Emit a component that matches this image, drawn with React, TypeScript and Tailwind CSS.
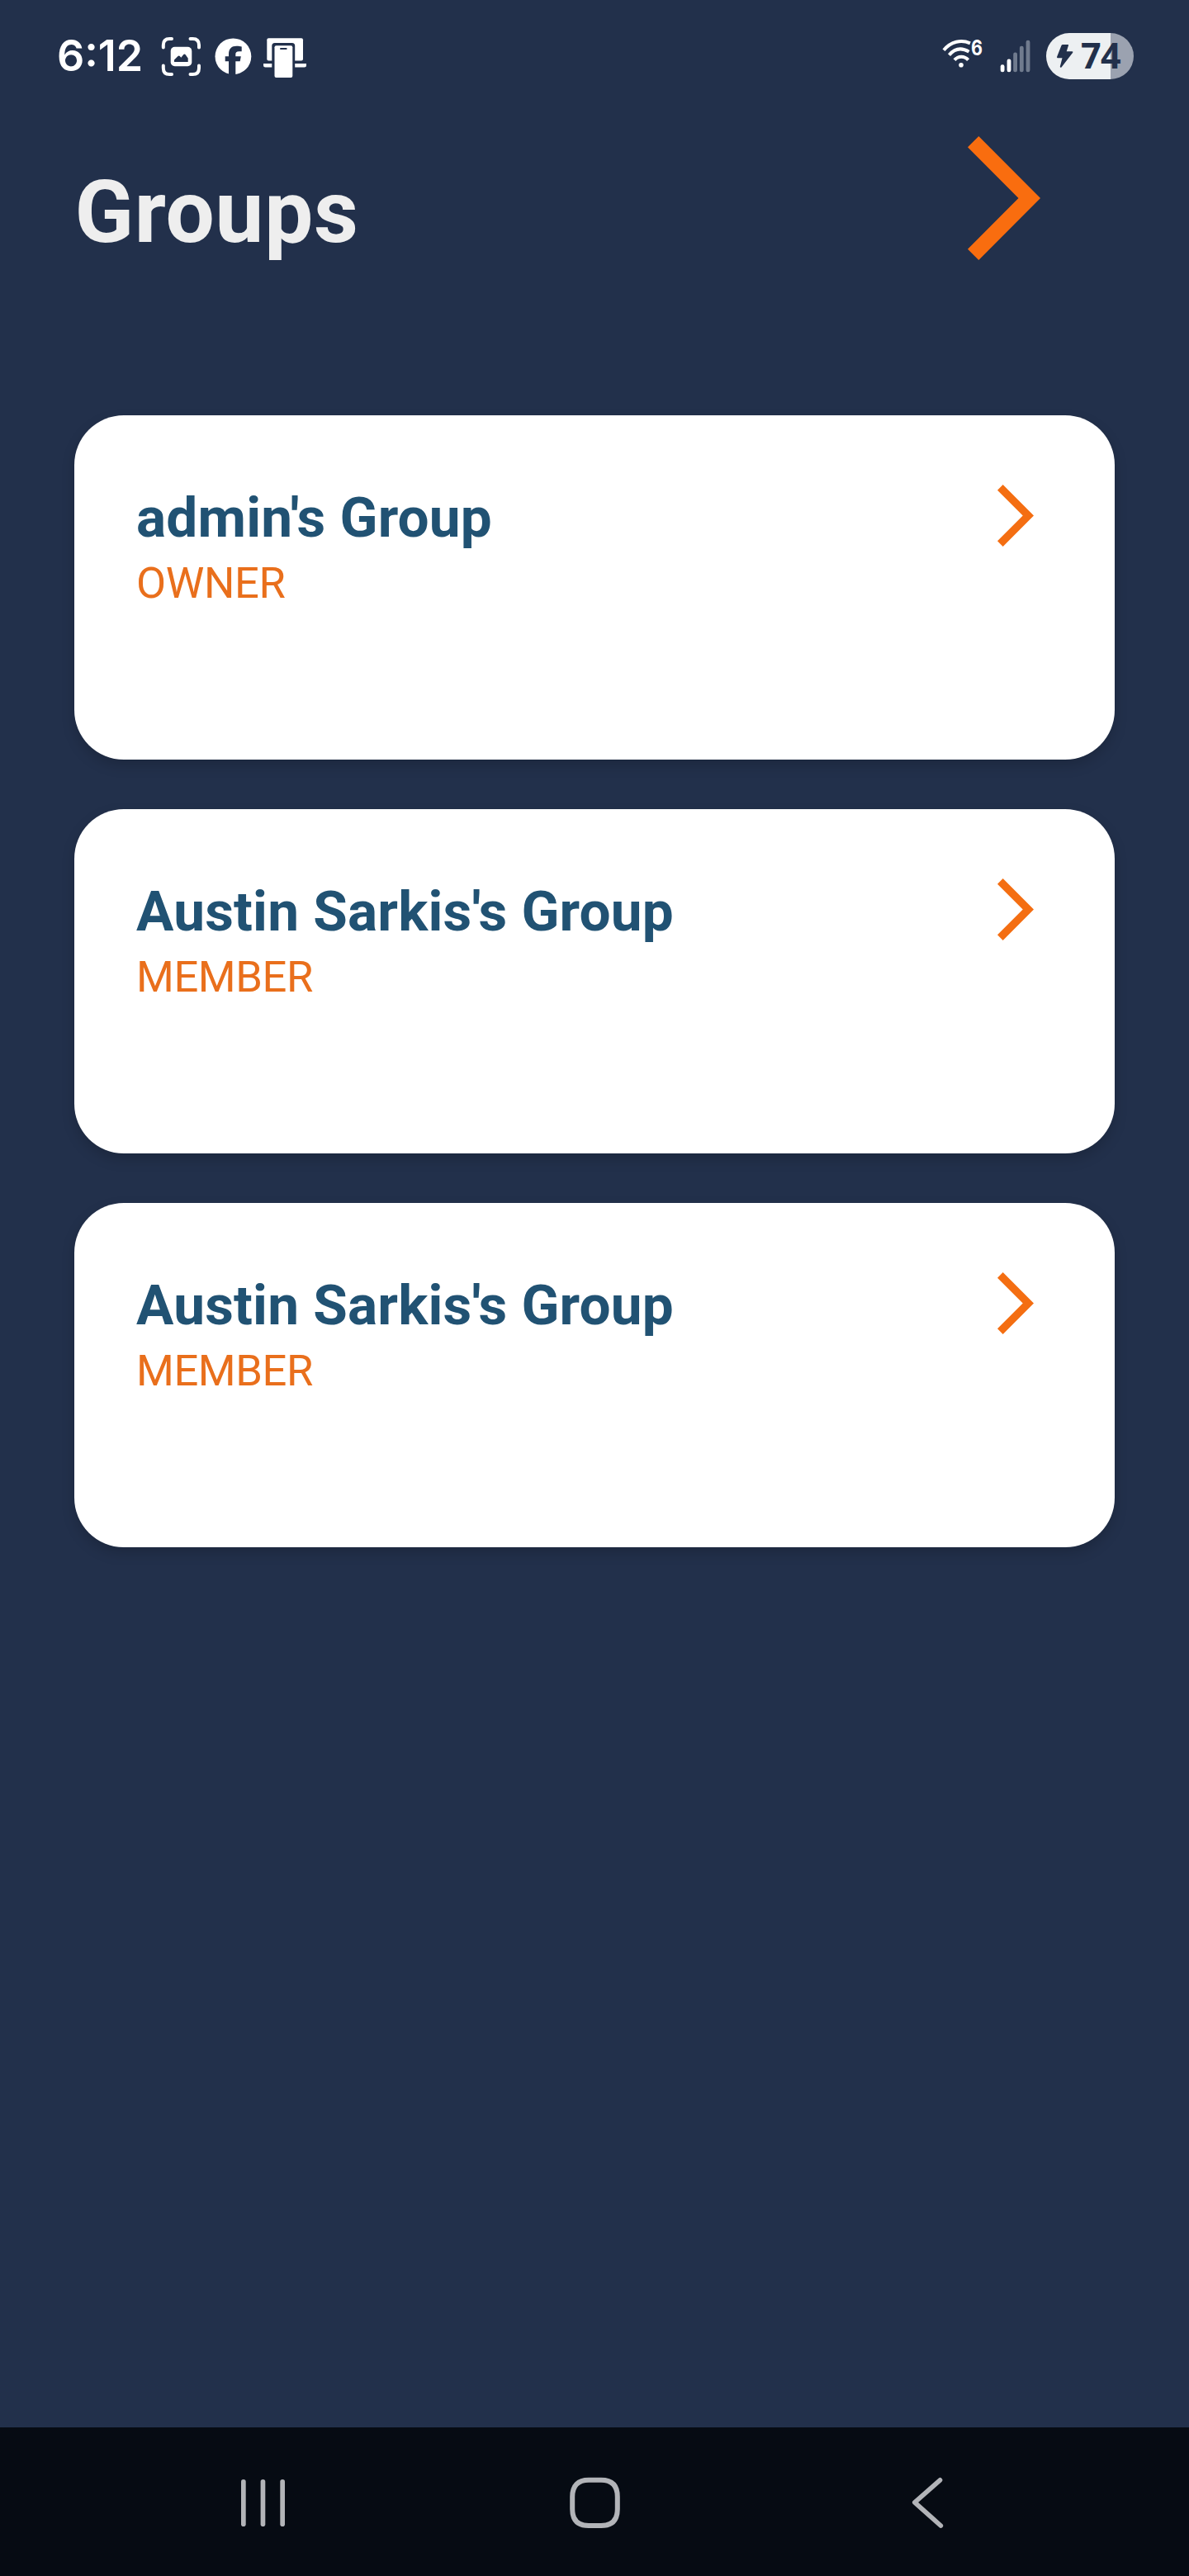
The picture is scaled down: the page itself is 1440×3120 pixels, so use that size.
import React from "react";

type Group = { name: string; role: string };

const groups: Group[] = [
  { name: "admin's Group", role: "OWNER" },
  { name: "Austin Sarkis's Group", role: "MEMBER" },
  { name: "Austin Sarkis's Group", role: "MEMBER" },
];

function CaptureIcon() {
  return (
    <svg className="ml-[24px] h-[56px] w-[50px]" viewBox="0 0 50 56" fill="none">
      <g stroke="#fff" strokeWidth="4" strokeLinecap="round">
        <path d="M2.8 17.5V14.5Q2.8 7 10.3 7H13" />
        <path d="M35.5 7H38.5Q46 7 46 14.5V17.5" />
        <path d="M2.8 39.5V42.5Q2.8 50 10.3 50H13" />
        <path d="M35.5 50H38.5Q46 50 46 42.5V39.5" />
      </g>
      <rect x="11.7" y="16.7" width="25.6" height="23.5" rx="5" fill="#fff" />
      <path
        d="M16 35V32.5L20.5 28Q21.7 27 22.8 28L24.3 29.7L27.3 26Q28.3 24.8 29.5 26L32.7 30.5V35Z"
        fill="#22304b"
      />
    </svg>
  );
}

function FacebookIcon() {
  return (
    <svg className="ml-[15px] h-[56px] w-[45px]" viewBox="0 0 45 56">
      <circle cx="22.4" cy="28.3" r="21.9" fill="#fff" />
      <path
        d="M17 52V34.3H12.7V28.3H17V25.5C17 19 20.5 15.8 26.5 15.8C29 15.8 31 16.1 32.7 16.5V22.2H29.5C26.3 22.2 25.3 23.5 25.3 25.8V28.3H31.8L30.7 34.3H25.3V52Z"
        fill="#22304b"
      />
    </svg>
  );
}

function LinkedPhoneIcon() {
  return (
    <svg className="ml-[13px] h-[56px] w-[54px]" viewBox="0 0 54 56">
      <rect x="5.3" y="6.3" width="43.7" height="27.2" rx="2" fill="#fff" />
      <path d="M1 37H53V39Q53 41.5 50.5 41.5H3.5Q1 41.5 1 39Z" fill="#fff" />
      <path d="M11.3 56V15.5Q11.3 12 14.8 12H35.7Q39.2 12 39.2 15.5V56Z" fill="#22304b" />
      <rect x="14.5" y="15.2" width="21.8" height="38.8" rx="2" fill="#fff" />
      <rect x="21" y="17.9" width="8.7" height="2.2" rx="1" fill="#22304b" />
    </svg>
  );
}

function WifiIcon() {
  return (
    <svg className="h-[56px] w-[52px]" viewBox="0 0 52 56" fill="none">
      <g stroke="#fff" strokeWidth="4">
        <path d="M3 20.8C12 10 24 7.8 35 12.3" />
        <path d="M9.500 26.6C16 19 24 17 33.5 22.6" />
        <path d="M16 32.6C20.5 27.3 28 27.3 32.6 32.6" />
      </g>
      <circle cx="24" cy="38.7" r="2.8" fill="#fff" />
      <text
        x="36"
        y="26.5"
        fill="#fff"
        fontFamily="Inter, sans-serif"
        fontSize="25"
        fontWeight="700"
        textLength="14"
        lengthAdjust="spacingAndGlyphs"
      >
        6
      </text>
    </svg>
  );
}

function SignalIcon() {
  return (
    <svg className="ml-[16px] h-[56px] w-[42px]" viewBox="0 0 42 56">
      <rect x="3.7" y="38.3" width="4.8" height="9" rx="2.2" fill="#fff" />
      <rect x="11.6" y="31.5" width="4.8" height="15.8" rx="2.2" fill="#fff" />
      <g fill="#707b8e">
        <rect x="19.2" y="23.5" width="4.8" height="23.8" rx="2.2" />
        <rect x="26.9" y="15.7" width="4.8" height="31.6" rx="2.2" />
        <rect x="34.6" y="8.7" width="4.8" height="38.6" rx="2.2" />
      </g>
    </svg>
  );
}

function Battery() {
  return (
    <div className="ml-[17px] flex h-[56px] w-[106px] items-center rounded-full bg-[linear-gradient(90deg,#edf0f2_78px,#9ba2b0_78px)]">
      <svg className="ml-[12px] h-[56px] w-[22px] shrink-0" viewBox="12 0 22 56">
        <path
          d="M20 14H26.5Q27.3 14 27 15L24.7 22.3H31.5Q33 22.5 32.2 23.7L18.5 41.5Q17 42.5 16.8 40.8L19.5 30.2H13.8Q12.7 30 13.1 28.8L18.5 15Q19 14 20 14Z"
          fill="#22304b"
        />
      </svg>
      <span className="mb-[3px] ml-[8px] font-[Open_Sans,sans-serif] text-[43px] leading-[56px] font-bold tracking-[-0.5px] text-[#22304b]">
        74
      </span>
    </div>
  );
}

function StatusBar() {
  return (
    <div className="flex h-[136px] items-center justify-between pr-[67px] pl-[69px] font-[Inter,sans-serif]">
      <div className="flex items-center">
        <span className="w-[102px] text-[52px] leading-[56px] font-semibold whitespace-nowrap text-white">6:12</span>
        <CaptureIcon />
        <FacebookIcon />
        <LinkedPhoneIcon />
      </div>
      <div className="flex items-center">
        <WifiIcon />
        <SignalIcon />
        <Battery />
      </div>
    </div>
  );
}

function Chevron({ className }: { className: string }) {
  return (
    <svg className={className} viewBox="0 0 88 150">
      <path d="M13.3 0L88 75L13.3 150L0 136.7L61.5 75L0 13.3Z" />
    </svg>
  );
}

function GroupCard({ name, role }: Group) {
  return (
    <button className="flex h-[417px] w-full items-start justify-between rounded-[60px] bg-white pt-[84px] pr-[98px] pl-[75px] text-left shadow-[0_7px_16px_rgba(0,0,0,0.17)]">
      <span className="flex flex-col">
        <span className="text-[67.5px] leading-[80px] font-bold tracking-[0.2px] whitespace-nowrap text-[#215273]">
          {name}
        </span>
        <span className="mt-[7px] text-[52.5px] leading-[64px] tracking-[-0.4px] text-[#e96f1c]">{role}</span>
      </span>
      <Chevron className="h-[75px] w-[44px] fill-[#f46e12]" />
    </button>
  );
}

function NavigationBar() {
  return (
    <nav className="flex h-[180px] items-center justify-between bg-[#060b13] pr-[275px] pl-[279px]">
      <svg className="size-[80px]" viewBox="0 0 80 80" fill="#b2b4b8">
        <rect x="13" y="13" width="5.7" height="57" rx="2.8" />
        <rect x="36.6" y="13" width="5.7" height="57" rx="2.8" />
        <rect x="60.3" y="13" width="5.7" height="57" rx="2.8" />
      </svg>
      <svg className="size-[80px]" viewBox="0 0 80 80" fill="none">
        <path
          d="M31 13.8H46Q65.8 13.8 65.8 34V49Q65.8 69 46 69H31Q11.2 69 11.2 49V34Q11.2 13.8 31 13.8Z"
          stroke="#b2b4b8"
          strokeWidth="6"
        />
      </svg>
      <svg className="size-[80px]" viewBox="0 0 80 80" fill="none">
        <path
          d="M53.5 13.8L22.8 40.8L54.3 69"
          stroke="#b2b4b8"
          strokeWidth="5.7"
          strokeLinecap="round"
          strokeLinejoin="round"
        />
      </svg>
    </nav>
  );
}

export default function App() {
  return (
    <div className="flex h-[3120px] w-[1440px] flex-col bg-[#22304b] font-[Roboto,sans-serif]">
      <StatusBar />
      <header className="flex h-[367px] items-start justify-between pr-[180px] pl-[90.5px]">
        <h1 className="mt-[60px] text-[105px] leading-[124px] font-bold tracking-[0.8px] text-[#eeeeee]">Groups</h1>
        <Chevron className="mt-[29px] h-[150px] w-[88px] fill-[#f96d0f]" />
      </header>
      <main className="flex flex-1 flex-col gap-[60px] px-[90px]">
        {groups.map((group, index) => (
          <GroupCard key={index} {...group} />
        ))}
      </main>
      <NavigationBar />
    </div>
  );
}
